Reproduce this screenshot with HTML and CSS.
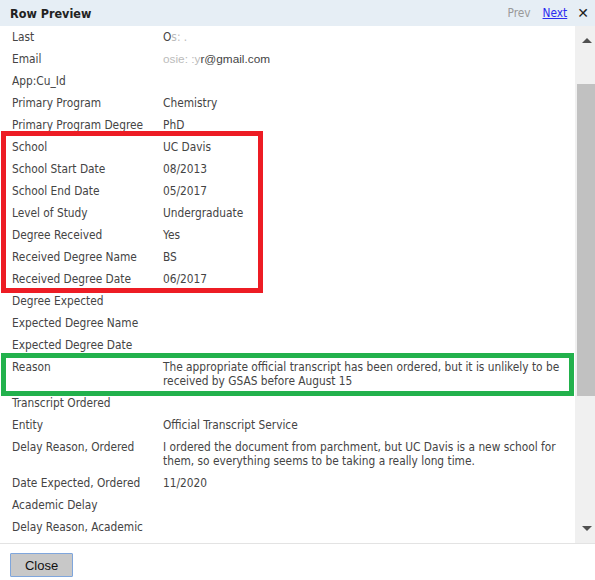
FILE: index.html
```html
<!DOCTYPE html>
<html lang="en">
<head>
  <meta charset="UTF-8">
  <title>Row Preview</title>
  <link rel="stylesheet" href="styles.css">
</head>
<body>

<div class="dialog">
  <div class="titlebar">
    <span class="title">Row Preview</span>
    <div class="nav">
      <span class="prev">Prev</span>
      <a class="next" href="#">Next</a>
      <span class="close-x">&#x2715;</span>
    </div>
  </div>

  <div class="body">
    <div class="rows">
      <div class="row"><div class="label">Last</div><div class="value">O<span class="blur">s:&nbsp;.</span></div></div>
      <div class="row"><div class="label">Email</div><div class="value mail"><span class="blur">osie: :y</span>r@gmail.com</div></div>
      <div class="row"><div class="label">App:Cu_Id</div><div class="value"></div></div>
      <div class="row"><div class="label">Primary Program</div><div class="value">Chemistry</div></div>
      <div class="row"><div class="label">Primary Program Degree</div><div class="value">PhD</div></div>
      <div class="row"><div class="label">School</div><div class="value">UC Davis</div></div>
      <div class="row"><div class="label">School Start Date</div><div class="value">08/2013</div></div>
      <div class="row"><div class="label">School End Date</div><div class="value">05/2017</div></div>
      <div class="row"><div class="label">Level of Study</div><div class="value">Undergraduate</div></div>
      <div class="row"><div class="label">Degree Received</div><div class="value">Yes</div></div>
      <div class="row"><div class="label">Received Degree Name</div><div class="value">BS</div></div>
      <div class="row"><div class="label">Received Degree Date</div><div class="value">06/2017</div></div>
      <div class="row"><div class="label">Degree Expected</div><div class="value"></div></div>
      <div class="row"><div class="label">Expected Degree Name</div><div class="value"></div></div>
      <div class="row"><div class="label">Expected Degree Date</div><div class="value"></div></div>
      <div class="row"><div class="label">Reason</div><div class="value">The appropriate official transcript has been ordered, but it is unlikely to be received by GSAS before August 15</div></div>
      <div class="row"><div class="label">Transcript Ordered</div><div class="value"></div></div>
      <div class="row"><div class="label">Entity</div><div class="value">Official Transcript Service</div></div>
      <div class="row"><div class="label">Delay Reason, Ordered</div><div class="value">I ordered the document from parchment, but UC Davis is a new school for them, so everything seems to be taking a really long time.</div></div>
      <div class="row"><div class="label">Date Expected, Ordered</div><div class="value">11/2020</div></div>
      <div class="row"><div class="label">Academic Delay</div><div class="value"></div></div>
      <div class="row"><div class="label">Delay Reason, Academic</div><div class="value"></div></div>

      <!-- highlight frames drawn over the school block and the reason row -->
      <div class="mark mark-red"></div>
      <div class="mark mark-green"></div>
    </div>

    <div class="scrollbar">
      <span class="arrow up"></span>
      <div class="thumb"></div>
      <span class="arrow down"></span>
    </div>
  </div>

  <div class="footer">
    <button class="close-btn">Close</button>
  </div>
</div>

</body>
</html>
```

FILE: styles.css
```css
body {
  margin: 0;
  padding: 0;
  background: white;
  font-family: "DejaVu Sans Condensed", "DejaVu Sans", sans-serif;
  font-size: 11.8px;
  color: #444;
}

.dialog {
  width: 595px;
  height: 580px;
  display: flex;
  flex-direction: column;
  overflow: hidden;
}

.titlebar {
  height: 26px;
  flex-shrink: 0;
  background: #e6eef5;
  display: flex;
  align-items: center;
  justify-content: space-between;
  padding: 0 0 0 10px;
}

.title {
  font-family: "DejaVu Sans Condensed", "DejaVu Sans", sans-serif;
  font-weight: bold;
  font-size: 12.5px;
  color: #222;
}

.nav {
  display: flex;
  align-items: center;
  gap: 12px;
  margin-right: 6px;
}

.prev {
  color: #999;
}

.next {
  color: #2b2bf0;
  text-decoration: underline;
}

.close-x {
  font-family: "DejaVu Sans", sans-serif;
  font-size: 14px;
  font-weight: bold;
  color: #222;
  margin-left: -2px;
}

.body {
  height: 517px;
  flex-shrink: 0;
  display: flex;
  overflow: hidden;
}

.rows {
  position: relative;
  flex: 1;
  padding-left: 12px;
}

.row {
  display: flex;
  padding: 4px 0;
  line-height: 14px;
}

.label {
  width: 151px;
  flex-shrink: 0;
}

.value {
  width: 406px;
}

.mail {
  font-family: "Liberation Sans", Arial, sans-serif;
}

.blur {
  color: #bbb;
}

.mark {
  position: absolute;
  box-sizing: border-box;
  pointer-events: none;
}

.mark-red {
  left: 1px;
  top: 105px;
  width: 262px;
  height: 162px;
  border: 5px solid #ed1c24;
}

.mark-green {
  left: 1px;
  top: 327px;
  width: 573px;
  height: 43px;
  border: 5px solid #22b14c;
}

/* hand-drawn scrollbar */
.scrollbar {
  width: 20px;
  flex-shrink: 0;
  background: #f0f0f0;
  position: relative;
}

.thumb {
  position: absolute;
  left: 2px;
  right: 0;
  top: 58px;
  height: 312px;
  background: #c1c1c1;
}

.arrow {
  position: absolute;
  left: 7px;
  width: 0;
  height: 0;
  border-left: 5px solid transparent;
  border-right: 5px solid transparent;
}

.arrow.up {
  top: 12px;
  border-bottom: 5px solid #505050;
}

.arrow.down {
  bottom: 12px;
  border-top: 5px solid #505050;
}

.footer {
  flex: 1;
  border-top: 1px solid #e3e3e3;
  padding: 9px 0 0 10px;
}

.close-btn {
  width: 63px;
  height: 24px;
  background: #c8c8c8;
  border: 1px solid #7fa6dc;
  border-radius: 1px;
  font-family: "Liberation Sans", Arial, sans-serif;
  font-size: 13px;
  color: #111;
  padding: 0;
}
```
